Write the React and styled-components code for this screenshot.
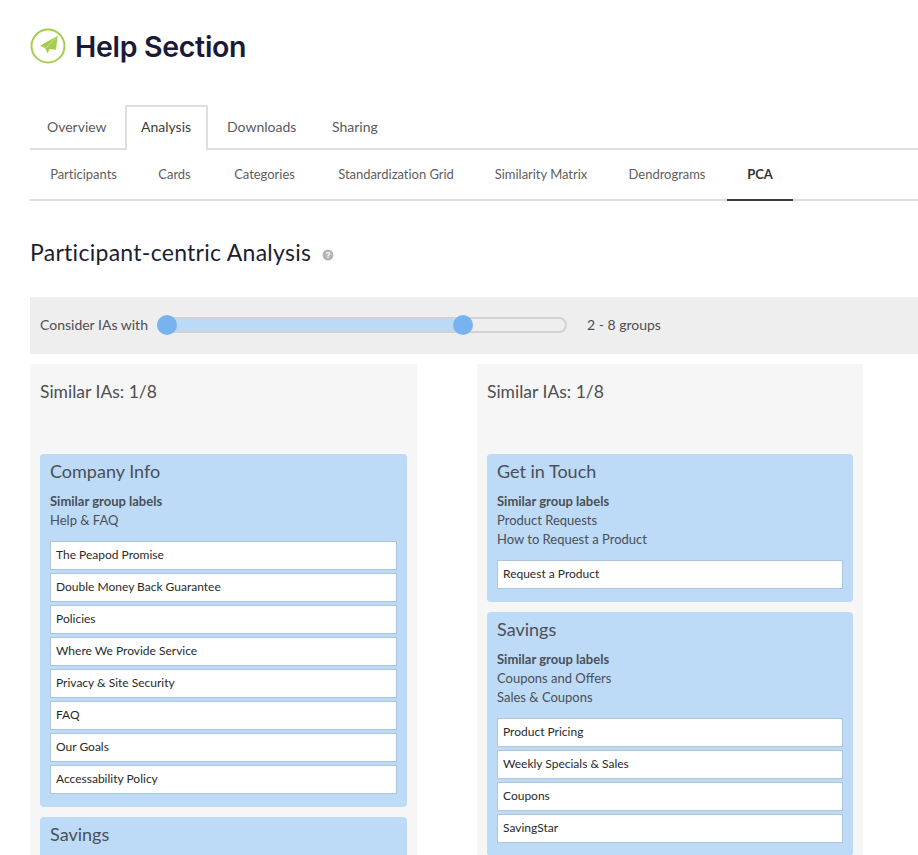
import React from 'react';
import styled, { createGlobalStyle } from 'styled-components';

const GlobalStyle = createGlobalStyle`
  html, body {
    margin: 0;
    padding: 0;
    background: #fff;
    overflow: hidden;
  }
  body {
    font-family: 'Lato', 'Liberation Sans', sans-serif;
    color: #4d4d4d;
  }
`;

const Page = styled.div`
  width: 918px;
  height: 855px;
  overflow: hidden;
  padding: 28px 0 0 30px;
  box-sizing: border-box;
`;

const TitleRow = styled.div`
  display: flex;
  align-items: center;
  gap: 9px;
  height: 36px;
`;

const Title = styled.h1`
  margin: 0;
  font-family: 'Inter', 'Liberation Sans', sans-serif;
  font-size: 28.5px;
  font-weight: 600;
  letter-spacing: -0.3px;
  color: #1a1a38;
`;

const TabBar = styled.div`
  display: flex;
  margin-top: 41px;
  height: 43px;
  border-bottom: 2px solid #dedede;
`;

const Tab = styled.div`
  display: flex;
  align-items: center;
  box-sizing: border-box;
  height: 43px;
  flex: none;
  width: ${(props) => props.width}px;
  padding-left: ${(props) => props.inset}px;
  font-size: 14px;
  color: ${(props) => (props.active ? '#3c3c3c' : '#5a5a5a')};
  background: #fff;
  ${(props) =>
    props.active &&
    `
    border: 2px solid #dedede;
    border-bottom: none;
    border-radius: 2px 2px 0 0;
    height: 45px;
    padding-bottom: 5px;
  `}
`;

const SubBar = styled.div`
  display: flex;
  height: 49px;
  border-bottom: 2px solid #dedede;
`;

const SubTab = styled.div`
  display: flex;
  align-items: center;
  box-sizing: border-box;
  flex: none;
  width: ${(props) => props.width}px;
  justify-content: center;
  height: 49px;
  padding-bottom: 2px;
  font-size: 13px;
  letter-spacing: -0.03px;
  color: ${(props) => (props.active ? '#333' : '#5e5e5e')};
  font-weight: ${(props) => (props.active ? 700 : 400)};
  ${(props) => props.active && `border-bottom: 2px solid #3a3a3a; height: 51px;`}
`;

const HeadingRow = styled.div`
  display: flex;
  align-items: center;
  gap: 11px;
  margin-top: 36px;
  height: 30px;
`;

const Heading = styled.h2`
  margin: 0;
  font-size: 23px;
  font-weight: 400;
  color: #1d1d2e;
  letter-spacing: 0.28px;
`;

const HelpMark = styled.svg`
  margin-top: 6px;
`;

const Toolbar = styled.div`
  display: flex;
  align-items: center;
  margin-top: 30px;
  height: 57px;
  box-sizing: border-box;
  padding: 0 0 2px 10px;
  background: #eeeeee;
  font-size: 14px;
  color: #4f4f4f;
`;

const SliderTrack = styled.div`
  position: relative;
  width: 410px;
  height: 16px;
  margin-left: 9px;
  margin-right: 20px;
  box-sizing: border-box;
  border: 2px solid #d2d2d2;
  border-radius: 8px;
  background: #eeeeee;
`;

const SliderFill = styled.div`
  position: absolute;
  top: 0;
  bottom: 0;
  left: 8px;
  background: #bcd9f5;
`;

const Thumb = styled.div`
  position: absolute;
  top: -4px;
  width: 20px;
  height: 20px;
  margin-left: -10px;
  border-radius: 50%;
  background: #78b3ef;
`;

const Columns = styled.div`
  display: flex;
  gap: 60px;
  margin-top: 10px;
`;

const Column = styled.div`
  width: ${(props) => props.width}px;
  flex: none;
  box-sizing: border-box;
  padding: 0 10px;
  background: #f6f6f6;
`;

const ColumnTitle = styled.div`
  height: 90px;
  padding-top: 17px;
  box-sizing: border-box;
  font-size: 17.5px;
  color: #4f4f4f;
`;

const Group = styled.div`
  background: #bddaf6;
  border-radius: 4px;
  padding: 6px 10px 13px;
  margin-bottom: 10px;
`;

const GroupTitle = styled.div`
  font-size: 18px;
  line-height: 22px;
  color: #4a5058;
`;

const Labels = styled.div`
  margin-top: 10px;
  min-height: 38px;
  font-size: 13px;
  line-height: 19px;
  color: #4a5058;
`;

const LabelHead = styled.div`
  font-weight: 700;
`;

const Cards = styled.div`
  display: flex;
  flex-direction: column;
  gap: 3px;
  margin-top: 11px;
`;

const Card = styled.div`
  box-sizing: border-box;
  height: 29px;
  line-height: 26px;
  padding: 0 5px;
  background: #fff;
  border: 1px solid #aec6dc;
  font-size: 12px;
  color: #2a2a2a;
`;

const PlaneIcon = () => (
  <svg width="36" height="36" viewBox="0 0 36 36">
    <circle cx="18" cy="18" r="16.5" fill="none" stroke="#a4cd4b" strokeWidth="2" />
    <path d="M27.7 7.7 L10 17.7 L15 20 L17.7 25.5 L19.5 21 L26 21.7 Z" fill="#a4cd4b" />
    <path d="M27.7 7.7 L15.5 20.5" fill="none" stroke="#cbe29a" strokeWidth="1" />
  </svg>
);

const HelpIcon = () => (
  <HelpMark width="12" height="12" viewBox="0 0 12 12">
    <circle cx="6" cy="6" r="5.5" fill="#b5b5b5" />
    <text x="6" y="9" textAnchor="middle" fontSize="8.5" fontWeight="700" fill="#fff" fontFamily="Liberation Sans">?</text>
  </HelpMark>
);

const GroupBlock = ({ title, labels, cards }) => (
  <Group>
    <GroupTitle>{title}</GroupTitle>
    <Labels>
      {labels.length > 0 && <LabelHead>Similar group labels</LabelHead>}
      {labels.map((label) => (
        <div key={label}>{label}</div>
      ))}
    </Labels>
    <Cards>
      {cards.map((card) => (
        <Card key={card}>{card}</Card>
      ))}
    </Cards>
  </Group>
);

const tabs = [
  ['Overview', 95, 17],
  ['Analysis', 83, 14, true],
  ['Downloads', 107, 19],
  ['Sharing', 82, 17],
];

const subTabs = [
  ['Participants', 107],
  ['Cards', 75],
  ['Categories', 105],
  ['Standardization Grid', 158],
  ['Similarity Matrix', 132],
  ['Dendrograms', 120],
  ['PCA', 66],
];

const leftGroups = [
  {
    title: 'Company Info',
    labels: ['Help & FAQ'],
    cards: ['The Peapod Promise', 'Double Money Back Guarantee', 'Policies', 'Where We Provide Service', 'Privacy & Site Security', 'FAQ', 'Our Goals', 'Accessability Policy'],
  },
  // the rest of this group is below the fold in the screenshot
  { title: 'Savings', labels: [], cards: [] },
];

const rightGroups = [
  {
    title: 'Get in Touch',
    labels: ['Product Requests', 'How to Request a Product'],
    cards: ['Request a Product'],
  },
  {
    title: 'Savings',
    labels: ['Coupons and Offers', 'Sales & Coupons'],
    cards: ['Product Pricing', 'Weekly Specials & Sales', 'Coupons', 'SavingStar'],
  },
];

export default function App() {
  return (
    <Page>
      <GlobalStyle />
      <TitleRow>
        <PlaneIcon />
        <Title>Help Section</Title>
      </TitleRow>
      <TabBar>
        {tabs.map(([name, width, inset, active]) => (
          <Tab key={name} width={width} inset={inset} active={active}>{name}</Tab>
        ))}
      </TabBar>
      <SubBar>
        {subTabs.map(([name, width]) => (
          <SubTab key={name} width={width} active={name === 'PCA'}>{name}</SubTab>
        ))}
      </SubBar>
      <HeadingRow>
        <Heading>Participant-centric Analysis</Heading>
        <HelpIcon />
      </HeadingRow>
      <Toolbar>
        Consider IAs with
        <SliderTrack>
          <SliderFill style={{ width: '296px' }} />
          <Thumb style={{ left: '8px' }} />
          <Thumb style={{ left: '304px' }} />
        </SliderTrack>
        2 - 8 groups
      </Toolbar>
      <Columns>
        <Column width={387}>
          <ColumnTitle>Similar IAs: 1/8</ColumnTitle>
          {leftGroups.map((group) => (
            <GroupBlock key={group.title} {...group} />
          ))}
        </Column>
        <Column width={386}>
          <ColumnTitle>Similar IAs: 1/8</ColumnTitle>
          {rightGroups.map((group) => (
            <GroupBlock key={group.title} {...group} />
          ))}
        </Column>
      </Columns>
    </Page>
  );
}
